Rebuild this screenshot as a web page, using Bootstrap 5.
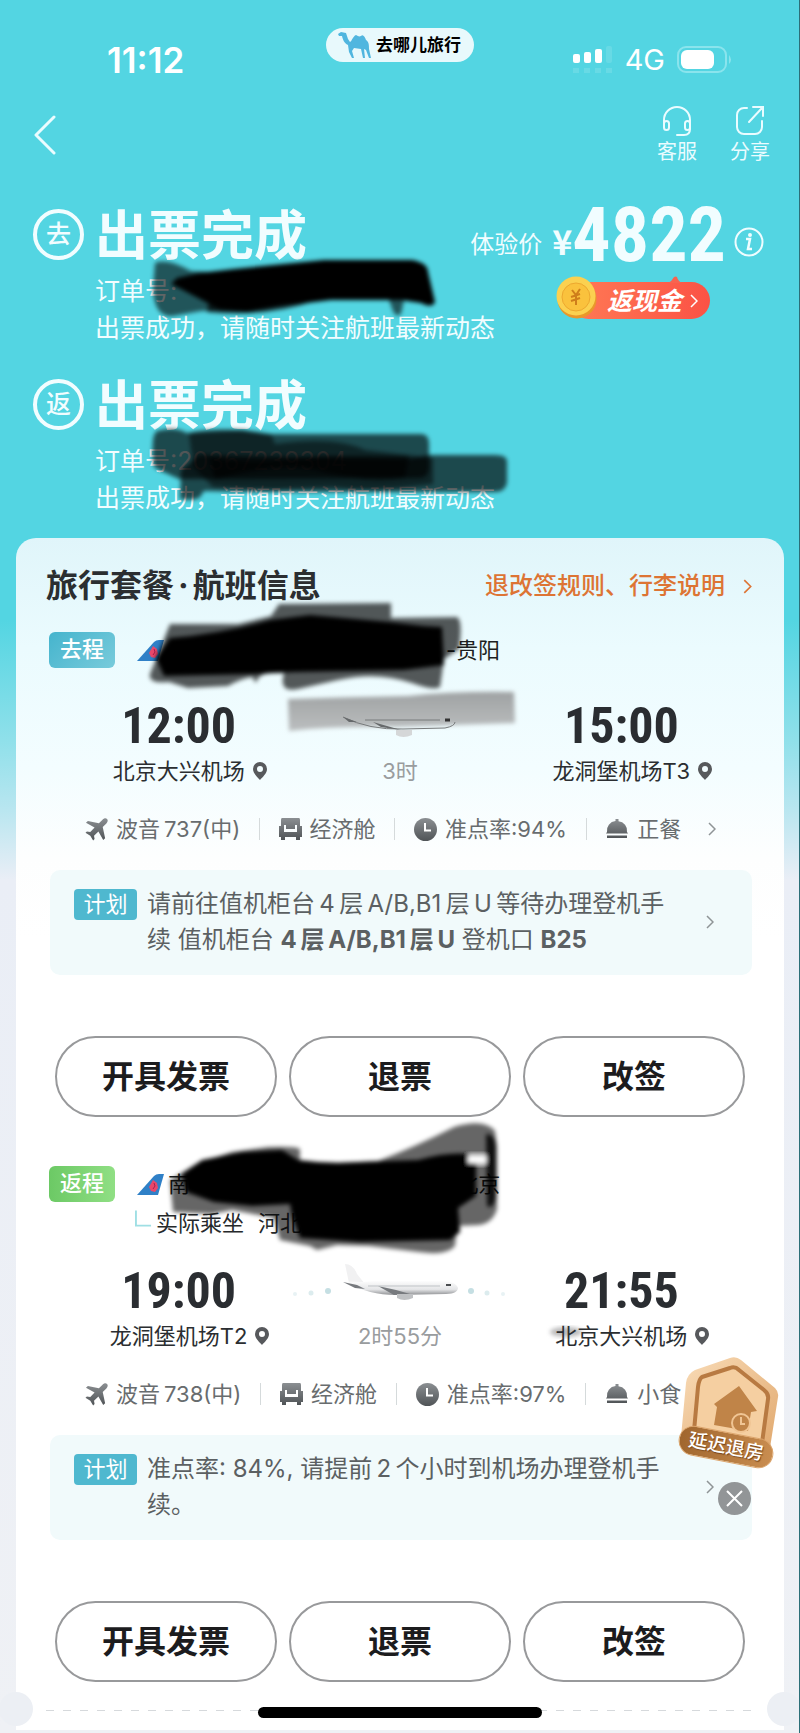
<!DOCTYPE html>
<html lang="zh-CN">
<head>
<meta charset="utf-8">
<meta name="viewport" content="width=device-width, initial-scale=1">
<title>订单详情</title>
<link href="https://cdn.jsdelivr.net/npm/bootstrap@5.3.0/dist/css/bootstrap.min.css" rel="stylesheet">
<style>
  body { font-family: Inter, "Noto Sans CJK SC", sans-serif; color: #2b2e31; background: #eff1f5; }
  .screen { min-height: 100vh; overflow: hidden; border-right: 1px solid #2c6f78;
    background: linear-gradient(#53d5e2 0, #53d5e2 620px, #8fe0ea 740px, #b9e6f0 810px, #eaeef6 880px, #eff1f5 100%); }
  .statusbar { display: grid; grid-template-columns: 1fr auto 1fr; padding: 28px 67px 0 107px; color: #fff; }
  .clock-text { font-weight: 600; font-size: 35px; line-height: 64px; }
  .brand { height: 34px; border-radius: 17px; background: #e8f9fc; color: #000; font-size: 17px; line-height: 34px; width: 148px; margin-left: -20px; margin-right: 20px; }
  .net-text { font-size: 29px; line-height: 64px; margin: 0 12px; }
  .topnav { padding: 12px 29px 0 33px; }
  .plainbtn { border: 0; background: none; padding: 0; color: inherit; }
  .topnav .plainbtn { color: #eafcff; }
  .nav-pair { gap: 33px; }
  .nav-label { font-size: 20px; line-height: 26px; }
  .orders { padding: 43px 35px 23px 33px; color: #f1fdff; }
  .leg-mark { width: 51px; height: 51px; border: 4px solid #f1fdff; border-radius: 50%; font-size: 25px; font-weight: 500; line-height: 43px; margin: 1px 11px 0 0; }
  .state { font-size: 53px; line-height: 56px; font-weight: 700; margin: 0 0 7px; }
  .order-text { width: 0; }
  .order-line { font-size: 25px; line-height: 40px; }
  .order-note { font-size: 25px; line-height: 34px; }
  .order + .order { margin-top: 33px; }
  .ink { position: absolute; pointer-events: none; overflow: visible; }
  .num { font-family: "Roboto Condensed", "Liberation Sans Narrow", sans-serif; font-weight: 700; }
  .price { height: 56px; }
  .price-label { font-size: 24px; line-height: 74px; margin-right: 10px; }
  .yen { font-size: 34px; font-weight: 700; font-family: "Noto Sans CJK SC", sans-serif; line-height: 66px; }
  .price .num { font-size: 76px; line-height: 54px; }
  .info { margin: 19px 0 0 8px; }
  .cashback { height: 37px; margin: 18px 54px 0 0; border-radius: 19px; background: linear-gradient(90deg, #ff7a55, #fb5245); color: #fff; font-size: 25px; line-height: 36px; font-weight: 700; font-style: italic; padding: 0 12px 0 37px; }
  .coin { position: absolute; left: -14px; top: -6px; }
  .tail { position: absolute; right: 28px; top: -6px; }
  .sheet { margin: 0 15px 0 16px; border-radius: 20px 20px 0 0; padding: 24px 32px 19px 34px;
    background: linear-gradient(#e0f5fa 0, #ebfbfe 110px, #f3fdff 230px, #fdfefe 320px, #fff 400px); }
  .sheet-title { font-size: 32px; line-height: 48px; font-weight: 700; margin: 0 0 22px -4px; }
  .rules { font-size: 24px; line-height: 48px; font-weight: 500; color: #dd7434; text-decoration: none; gap: 18px; }
  .leg-tag { width: 66px; height: 36px; border-radius: 6px; font-size: 22px; line-height: 35px; color: #fff; font-weight: 500; margin: 0 22px 0 -1px; }
  .out { background: linear-gradient(135deg, #45b4cd, #78cbdb); }
  .back { background: linear-gradient(90deg, #6cc965, #90df84); }
  .route { font-size: 22px; line-height: 36px; color: #1d1f21; }
  .route-hidden { width: 282px; }
  .name-hidden { width: 212px; }
  .actual { font-size: 22px; line-height: 32px; margin: 5px 0 25px 85px; color: #26292b; gap: 14px; }
  .schedule { padding: 0 20px 0 18px; }
  .times { margin-top: 31px; }
  .hour { font-size: 50px; line-height: 54px; color: #2a2d31; }
  .place { font-size: 22px; line-height: 36px; }
  .place.pinned { padding-left: 26px; }
  .duration { color: #999c9e; }
  .facts { font-size: 22px; line-height: 32px; color: #686c6e; margin: 24px 36px 25px 35px; }
  .bar { width: 1px; height: 22px; background: #d5dadb; }
  .chev { color: #8f9496; }
  .plan { background: #f1fafb; border-radius: 10px; padding: 16px 38px 17px 24px; color: #5b6062; }
  .plan-tag { background: #4fb8cf; color: #fff; border-radius: 4px; width: 63px; height: 31px; font-size: 22px; line-height: 30px; margin: 3px 10px 0 0; }
  .plan-text { font-size: 24px; line-height: 36px; width: 480px; }
  .actions { margin: 61px 7px 0 5px; gap: 12px; }
  .action { height: 81px; border: 2px solid #98999b; border-radius: 41px; background: #fff; font-size: 32px; font-weight: 700; color: #1c1c1e; }
  .leg + .leg { margin-top: 49px; }
  .perforation { margin: 28px 0 0 -4px; height: 1px; border: 0; opacity: 1; background: repeating-linear-gradient(90deg, #d6d9dc 0 8px, transparent 8px 17px); }
  .notch { position: absolute; width: 34px; height: 34px; border-radius: 50%; background: #eceff4; bottom: 4px; }
  .notch.l { left: -17px; } .notch.r { right: -17px; }
  .homebar { position: absolute; left: 50%; bottom: 15px; width: 284px; height: 11px; margin-left: -142px; border-radius: 6px; background: #000; }
  .promo { position: absolute; right: 19px; bottom: 218px; width: 102px; height: 158px; }
  .promo-label { position: absolute; left: 0; top: 75px; width: 96px; height: 30px; border-radius: 15px; background: linear-gradient(90deg, #a0662e, #c98d50); border: 1px solid #dca56c; color: #fff; font-size: 19px; line-height: 27px; font-weight: 500; transform: rotate(11deg); text-shadow: 1px 1px 1px #7b4718; }
  .promo-close { position: absolute; right: 29px; bottom: 0; }
</style>
</head>
<body>
<svg width="0" height="0" class="position-absolute" aria-hidden="true">
  <defs>
    <filter id="soft" x="-10%" y="-20%" width="120%" height="140%"><feGaussianBlur stdDeviation="2"/></filter>
    <linearGradient id="g" x1="0" y1="0" x2="0" y2="1"><stop offset="0" stop-color="#8b8f92"/><stop offset="1" stop-color="#505457"/></linearGradient>
    <linearGradient id="hull" x1="0" y1="0" x2="0" y2="1"><stop offset="0" stop-color="#fdfdfd"/><stop offset=".6" stop-color="#e4e5e7"/><stop offset="1" stop-color="#8f9194"/></linearGradient>
    <linearGradient id="haze" x1="0" y1="0" x2="0" y2="1"><stop offset="0" stop-color="#9fa2a3"/><stop offset="1" stop-color="#bbbebf"/></linearGradient>
    <symbol id="pin" viewBox="0 0 14 18"><path fill="#57595c" fill-rule="evenodd" d="M7 0a7 7 0 0 0-7 7c0 4.500 4.500 8 7 11 2.500-3 7-6.500 7-11a7 7 0 0 0-7-7zm0 4a3 3 0 1 1 0 6 3 3 0 0 1 0-6z"/></symbol>
    <symbol id="jet" viewBox="0 0 24 24"><path fill="url(#g)" d="M23 1c-1.300-1.300-3.400-.6-4.700.7L14.500 5.500 3 3 1 5l9 5-4.500 4.700L2 14l-1.500 1.500 5 3 3 5L10 22l-.6-3.500L14 14l5 9 2-2-2.500-11.500 3.800-3.800C23.600 4.400 24.300 2.300 23 1z"/></symbol>
    <symbol id="seat" viewBox="0 0 23 22"><path fill="url(#g)" fill-rule="evenodd" d="M3 0h17q1 0 1 2v6h2v11h-2v3h-4v-3H6v3H2v-3H0V8h2V2q0-2 1-2zM5 7v7h13V7h-2v4H7V7z"/></symbol>
    <symbol id="clock" viewBox="0 0 23 23"><circle cx="11.500" cy="11.500" r="11.500" fill="url(#g)"/><path d="M11 5v7.500h6" fill="none" stroke="#fff" stroke-width="2"/></symbol>
    <symbol id="meal" viewBox="0 0 24 22"><path fill="url(#g)" d="M10.500 3V1h3v2.200A9.500 9.500 0 0 1 22 14l1 1.500H1L2 14a9.500 9.500 0 0 1 8.500-11zM2 17.500h20V20H2z"/></symbol>
    <symbol id="more" viewBox="0 0 8 14"><path d="m1 1 6 6-6 6" fill="none" stroke="currentColor" stroke-width="1.500"/></symbol>
    <symbol id="fin" viewBox="0 0 27 21"><path d="M0 21 17 2q2-2 5-2h5l-6 21z" fill="#2f80c7"/><path d="m16 6 4 3 1 5-3 4-4-1-2-4z" fill="#e8476a"/><path d="m17 9 1 3-2 3" stroke="#a71f4e" fill="none"/></symbol>
    <symbol id="airliner" viewBox="0 0 220 40">
      <g fill="#c5dfe3"><circle cx="5" cy="30" r="2" opacity=".4"/><circle cx="21" cy="29" r="2.500" opacity=".6"/><circle cx="38" cy="27" r="3"/><circle cx="181" cy="27" r="3"/><circle cx="197" cy="29" r="2.500" opacity=".6"/><circle cx="213" cy="30" r="2" opacity=".4"/></g>
      <path d="M55 0q8 0 12 10l8 10-16-1z" fill="#f1f1f2"/>
      <path d="M54 18c8-1 16 1 28-1h70c9 0 15 3 16 7 0 3-4 6-12 6l-50 1c-18 0-35-4-46-12z" fill="url(#hull)"/>
      <path d="m53 18 14 3 8 4-10-1zM88 22l18 4 14 4-16 1z" fill="#777a7e"/><path d="M107 30h16v4q-9 4-16 0z" fill="#bfc1c3"/><path d="M78 22h72" stroke="#bfc3c6"/><path d="M156 21h5" stroke="#4a4d50" stroke-width="2"/>
    </symbol>
  </defs>
</svg>

<div class="screen position-relative">
  <header>
    <div class="statusbar">
      <div class="clock-text">11:12</div>
      <div class="brand d-flex align-items-center justify-content-center fw-bold gap-1">
        <svg width="34" height="26" viewBox="0 0 34 26"><path fill="#50b6df" d="M0 2 3 0l5 1 2 6 2 3c2-1 3-6 6-7 2 1 3 2 5 1 2-2 4 1 5 4 3 2 3 5 3 9l2 9h-2l-3-8-2-1 1 9h-2l-2-9-7-1-2 3 2 7h-2l-3-6-1-7c-4-2-5-5-6-9L1 4z"/></svg>
        <span>去哪儿旅行</span>
      </div>
      <div class="d-flex align-items-center justify-content-end">
        <svg width="40" height="30" viewBox="0 0 40 30"><g fill="#fff"><rect y="9" width="7" height="9" rx="2"/><rect x="11" y="7" width="7" height="11" rx="2"/><rect x="22" y="4" width="7" height="14" rx="2"/><rect x="33" y="1" width="6" height="17" rx="2" opacity=".12"/></g><g fill="#fff" opacity=".12"><rect y="23" width="6" height="5"/><rect x="11" y="23" width="6" height="5"/><rect x="22" y="23" width="6" height="5"/><rect x="33" y="23" width="6" height="5"/></g></svg>
        <span class="net-text">4G</span>
        <svg width="55" height="28" viewBox="0 0 55 28"><rect x="1" y="1" width="48" height="25" rx="8" fill="none" stroke="#8ae4ed" stroke-width="2"/><rect x="4" y="4" width="33" height="19" rx="6" fill="#fff"/><path d="M52 9q4 5 0 9z" fill="#8ae4ed"/></svg>
      </div>
    </div>
    <nav class="topnav d-flex justify-content-between align-items-center">
      <button class="plainbtn" type="button" aria-label="返回"><svg width="24" height="40" viewBox="0 0 24 40"><path d="M21 2 3 20l18 18" fill="none" stroke="currentColor" stroke-width="3" stroke-linecap="round" stroke-linejoin="round"/></svg></button>
      <div class="nav-pair d-flex">
        <button class="plainbtn d-flex flex-column align-items-center" type="button">
          <svg width="30" height="35" viewBox="0 0 30 35" fill="none" stroke="currentColor" stroke-width="2"><path d="M2 19v-3a13 13 0 0 1 26 0v9q0 6-6 6h-7" stroke-linecap="round"/><rect x="2" y="17" width="5" height="9" rx="2.500"/><rect x="23" y="17" width="5" height="9" rx="2.500"/></svg>
          <span class="nav-label">客服</span>
        </button>
        <button class="plainbtn d-flex flex-column align-items-center" type="button">
          <svg width="30" height="35" viewBox="0 0 30 35" fill="none" stroke="currentColor" stroke-width="2" stroke-linecap="round"><path d="M12 4H9a7 7 0 0 0-7 7v12a7 7 0 0 0 7 7h11a7 7 0 0 0 7-7v-6M14 18 27 4m-9-1h10v9"/></svg>
          <span class="nav-label">分享</span>
        </button>
      </div>
    </nav>

    <section class="orders">
      <div class="order d-flex position-relative">
        <div class="leg-mark text-center flex-shrink-0">去</div>
        <div class="order-text flex-grow-1 text-nowrap">
          <h1 class="state">出票完成</h1>
          <div class="order-line">订单号:</div>
          <div class="order-note">出票成功，请随时关注航班最新动态</div>
        </div>
        <div class="d-flex flex-column align-items-end flex-shrink-0">
          <div class="price d-flex align-items-start">
            <span class="price-label">体验价</span><span class="yen">¥</span><span class="num">4822</span>
            <button class="info plainbtn d-flex" type="button" aria-label="价格说明"><svg width="30" height="30" viewBox="0 0 30 30" fill="none" stroke="#effdff" stroke-width="2"><circle cx="15" cy="15" r="13.500"/><path d="M12 12h4l-2 10h4" stroke-width="2.500"/><circle cx="16" cy="8" r="1"/></svg></button>
          </div>
          <button class="cashback plainbtn position-relative d-flex align-items-center" type="button">
            <svg class="coin" width="42" height="43" viewBox="0 0 42 43"><circle cx="21" cy="23" r="19.500" fill="#e9982a"/><circle cx="20" cy="20" r="19.500" fill="#fbd150"/><circle cx="20" cy="21" r="14" fill="#fac23d" stroke="#eda82f"/><path d="m16 14 4 5 4-6m-4 6v10m-5-8 9-3m-9 7 9-3" fill="none" stroke="#cf7e1b" stroke-width="2"/></svg>
            <svg class="tail" width="14" height="7" viewBox="0 0 14 7"><path d="M0 7q4-2 6-6 2-1 3 0 1 4 5 6z" fill="#f8634f"/></svg>
            <span>返现金</span><svg class="ms-2" width="8" height="14"><use href="#more"/></svg>
          </button>
        </div>
        <svg class="ink" style="left:116px;top:50px" width="290" height="62" viewBox="0 0 290 62"><g filter="url(#soft)"><path d="M6 5q12-5 36 8l40 2v37l-30 1-28 5Q5 60 4 30z" opacity=".6"/><path d="M58 54q60 6 110-12H60z" opacity=".7"/><path d="M28 20 50 15l35-4 90-9 88 0q16 3 16 12l7 30q-3 7-14 1l-20-3-70 0-50 6-34 6-26-2-42-22-8-4z"/><path d="M240 42h15l-3 14q-5 4-8-3z" opacity=".6"/></g></svg>
      </div>
      <div class="order d-flex position-relative">
        <div class="leg-mark text-center flex-shrink-0">返</div>
        <div class="flex-grow-1 text-nowrap">
          <h2 class="state">出票完成</h2>
          <div class="order-line">订单号:20367239304</div>
          <div class="order-note">出票成功，请随时关注航班最新动态</div>
        </div>
        <svg class="ink" style="left:116px;top:50px" width="366" height="74" viewBox="0 0 366 74"><g filter="url(#soft)"><path d="M8 3q18-5 30 2l55-3 25 4 155 0q7 1 7 9v26q-1 9-10 9l-240 1L8 41Q2 40 4 12 5 5 8 3z" opacity=".66"/><path d="M32 42 50 27l210 4 20-4 66 0q12 0 12 6v22q-2 9-12 9H200l-100 0-45-1-4 6q-4 4-20 2z" opacity=".66"/><path d="M40 5q28-8 82 1l4 10q60-8 90 6l68 8v26q-60 8-100 3l-60 2-60-2-20-20z" opacity=".5"/><path d="M60 30q60 6 110-2l90 0-4 22q-40 6-90-8-40-8-100 10z" opacity=".6"/></g></svg>
      </div>
    </section>
  </header>

  <main class="sheet position-relative">
    <div class="d-flex justify-content-between align-items-start">
      <h2 class="sheet-title">旅行套餐<span class="mx-1">·</span>航班信息</h2>
      <a class="rules d-flex align-items-center" href="#rules">退改签规则、行李说明<svg width="9" height="15"><use href="#more"/></svg></a>
    </div>

    <section class="leg position-relative">
      <div class="d-flex align-items-center">
        <span class="leg-tag out text-center">去程</span>
        <svg width="27" height="21"><use href="#fin"/></svg>
        <span class="route-hidden"></span><span class="route">-贵阳</span>
      </div>
      <svg class="ink" style="left:96px;top:-24px" width="326" height="84" viewBox="0 0 326 84"><g filter="url(#soft)"><path d="M24 16 92 16l33-8 8-12 112-1v15l66-1q6 3 2 32l-15 10-4 28q-6 4-28-4-36-12-74-3l-40 9q-20 4-14-16-25-3-28 10l-4-6q-12 2-24 9l-40 2-19-6Q2 76 4 66z" opacity=".65"/><path d="M24 30q50-4 100-18l40-5 80 7 34 4 18 1 2 38-40 5-110 2-40 2-90 2-8-18z"/></g></svg>
      <svg class="ink" style="left:236px;top:60px" width="230" height="42" viewBox="0 0 230 42"><path d="M2 7q60-2 120-3Q170-1 228 0l1 31-120 4Q50 34 3 39z" fill="url(#haze)" filter="url(#soft)"/></svg>
      <div class="schedule times row g-0 text-center">
        <div class="col-4"><div class="hour num">12:00</div><div class="place pinned d-flex justify-content-center align-items-center">北京大兴机场<svg class="ms-2 me-1" width="14" height="18"><use href="#pin"/></svg></div></div>
        <div class="col-4 position-relative"><svg class="d-block mx-auto" width="220" height="54" viewBox="0 0 220 54"><path d="M53 18q26 13 60 12l42-1q10-2 10-6M75 21h75" fill="none" stroke="#777a7b"/><path d="m53 18 14 5-8 0zM83 23l28 8-20-3z" fill="#66696b"/><path d="M106 31h16v5q-9 4-16 0z" fill="#d5d7d8"/><path d="M155 21h5" stroke="#333" stroke-width="3"/></svg><div class="place duration">3时</div></div>
        <div class="col-4"><div class="hour num">15:00</div><div class="place pinned d-flex justify-content-center align-items-center">龙洞堡机场T3<svg class="ms-2 me-1" width="14" height="18"><use href="#pin"/></svg></div></div>
      </div>
      <div class="facts d-flex justify-content-between align-items-center text-nowrap">
        <span class="d-flex align-items-center gap-2"><svg width="23" height="23"><use href="#jet"/></svg>波音&thinsp;737(中)</span><i class="bar"></i>
        <span class="d-flex align-items-center gap-2"><svg width="23" height="22"><use href="#seat"/></svg>经济舱</span><i class="bar"></i>
        <span class="d-flex align-items-center gap-2"><svg width="23" height="23"><use href="#clock"/></svg>准点率:94%</span><i class="bar"></i>
        <span class="d-flex align-items-center gap-2"><svg width="24" height="22"><use href="#meal"/></svg>正餐</span>
        <svg class="chev ms-2" width="8" height="14"><use href="#more"/></svg>
      </div>
      <div class="plan d-flex align-items-start">
        <span class="plan-tag text-center flex-shrink-0">计划</span>
        <div class="plan-text flex-grow-1">请前往值机柜台&thinsp;4&thinsp;层&thinsp;A/B,B1&thinsp;层&thinsp;U&thinsp;等待办理登机手续 值机柜台 <b>4&thinsp;层&thinsp;A/B,B1&thinsp;层&thinsp;U</b> 登机口 <b>B25</b></div>
        <svg class="chev align-self-center ms-4" width="8" height="14"><use href="#more"/></svg>
      </div>
      <div class="actions d-flex">
        <button class="action flex-fill w-100" type="button">开具发票</button>
        <button class="action flex-fill w-100" type="button">退票</button>
        <button class="action flex-fill w-100" type="button">改签</button>
      </div>
    </section>

    <section class="leg position-relative">
      <div class="d-flex align-items-center">
        <span class="leg-tag back text-center">返程</span>
        <svg width="27" height="21"><use href="#fin"/></svg>
        <span class="route ms-1">南</span><span class="name-hidden"></span><span class="route">贵阳-北京</span>
      </div>
      <div class="actual d-flex align-items-center"><span class="d-flex align-items-center"><svg width="17" height="18" class="mb-2 me-1" viewBox="0 0 18 18"><path d="M1 0v16h16" fill="none" stroke="#9fdfe4" stroke-width="2"/></svg>实际乘坐</span><span>河北航</span></div>
      <svg class="ink" style="left:122px;top:-44px" width="326" height="126" viewBox="0 0 326 126">
        <g filter="url(#soft)">
          <path d="M24 42 36 38 60 30l36-5q28-1 32 2v16l78-4Q245 24 282 5q30-9 41 4l2 16v62q-4 14-18 16l-22 1-2 20q-8 10-36 6l-50-6-32-1-20 5-7-4-30-6-6-22L60 88 40 92 1 90-2 58z" opacity=".6"/>
          <path d="m10 52 20-14 40-8 40-2 16 10q30 4 60 2l60-2q30-8 50-6l8 10v32l-18 12 2 24-10 8-90 2-60-4-8-22-2-12-38 2-38-4-28-10z"/>
          <path d="M314 12q9 0 10 12v50q-2 14-9 10z" opacity=".85"/>
          <path d="M296 34h18v7h-18z" fill="#fff"/>
        </g>
      </svg>
      <div class="schedule row g-0 text-center">
        <div class="col-4"><div class="hour num">19:00</div><div class="place pinned d-flex justify-content-center align-items-center">龙洞堡机场T2<svg class="ms-2 me-1" width="14" height="18"><use href="#pin"/></svg></div></div>
        <div class="col-4"><svg class="d-block mx-auto" width="220" height="54" viewBox="0 0 220 54"><use href="#airliner" width="220" height="40"/></svg><div class="place duration">2时55分</div></div>
        <div class="col-4 position-relative"><svg class="ink" style="left:38px;top:62px" width="34" height="12" viewBox="0 0 34 12"><ellipse cx="17" cy="6" rx="16" ry="5" fill="#b9b9ba" filter="url(#soft)"/></svg><div class="hour num">21:55</div><div class="place pinned position-relative d-flex justify-content-center align-items-center">北京大兴机场<svg class="ms-2 me-1" width="14" height="18"><use href="#pin"/></svg></div></div>
      </div>
      <div class="facts d-flex justify-content-between align-items-center text-nowrap">
        <span class="d-flex align-items-center gap-2"><svg width="23" height="23"><use href="#jet"/></svg>波音&thinsp;738(中)</span><i class="bar"></i>
        <span class="d-flex align-items-center gap-2"><svg width="23" height="22"><use href="#seat"/></svg>经济舱</span><i class="bar"></i>
        <span class="d-flex align-items-center gap-2"><svg width="23" height="23"><use href="#clock"/></svg>准点率:97%</span><i class="bar"></i>
        <span class="d-flex align-items-center gap-2"><svg width="24" height="22"><use href="#meal"/></svg>小食</span>
        <svg class="chev ms-2" width="8" height="14"><use href="#more"/></svg>
      </div>
      <div class="plan d-flex align-items-start">
        <span class="plan-tag text-center flex-shrink-0">计划</span>
        <div class="plan-text flex-grow-1">准点率: 84%, 请提前&thinsp;2&thinsp;个小时到机场办理登机手续。</div>
        <svg class="chev align-self-center ms-4" width="8" height="14"><use href="#more"/></svg>
      </div>
      <div class="actions d-flex">
        <button class="action flex-fill w-100" type="button">开具发票</button>
        <button class="action flex-fill w-100" type="button">退票</button>
        <button class="action flex-fill w-100" type="button">改签</button>
      </div>
    </section>
    <hr class="perforation">
    <span class="notch l"></span><span class="notch r"></span>
  </main>

  <aside class="promo">
    <svg width="102" height="110" viewBox="0 0 102 110">
      <defs><linearGradient id="gold" x1="0" y1="0" x2="1" y2="1"><stop offset="0" stop-color="#f9dcb8"/><stop offset="1" stop-color="#e0a76c"/></linearGradient></defs>
      <path d="M17 13 52 1q6-2 11 2l34 28q4 4 3 9l-9 57L3 80 8 26q1-9 9-13z" fill="url(#gold)"/>
      <path d="M24 20 52 11q5-2 9 2l25 20q5 4 4 9l-6 44-68-12 4-44q1-8 4-10z" fill="#f5cfa1" stroke="#b87a42" stroke-width="4"/>
      <path d="m36 47 25-18 18 25-6 1-3 19-34-6 3-18z" fill="#c08448"/><circle cx="63" cy="66" r="9" fill="#c08448" stroke="#f0c594" stroke-width="2"/><path d="M63 60v7h4" fill="none" stroke="#f0c594" stroke-width="2"/>
    </svg>
    <div class="promo-label text-center text-nowrap">延迟退房</div>
    <button class="promo-close plainbtn d-flex" type="button" aria-label="关闭"><svg width="33" height="33" viewBox="0 0 33 33"><circle cx="16.500" cy="16.500" r="16.500" fill="#929597"/><path d="m9 9 15 15m0-15L9 24" stroke="#fff" stroke-width="2"/></svg></button>
  </aside>
  <div class="homebar"></div>
</div>
<script src="https://cdn.jsdelivr.net/npm/bootstrap@5.3.0/dist/js/bootstrap.bundle.min.js"></script>
</body>
</html>
